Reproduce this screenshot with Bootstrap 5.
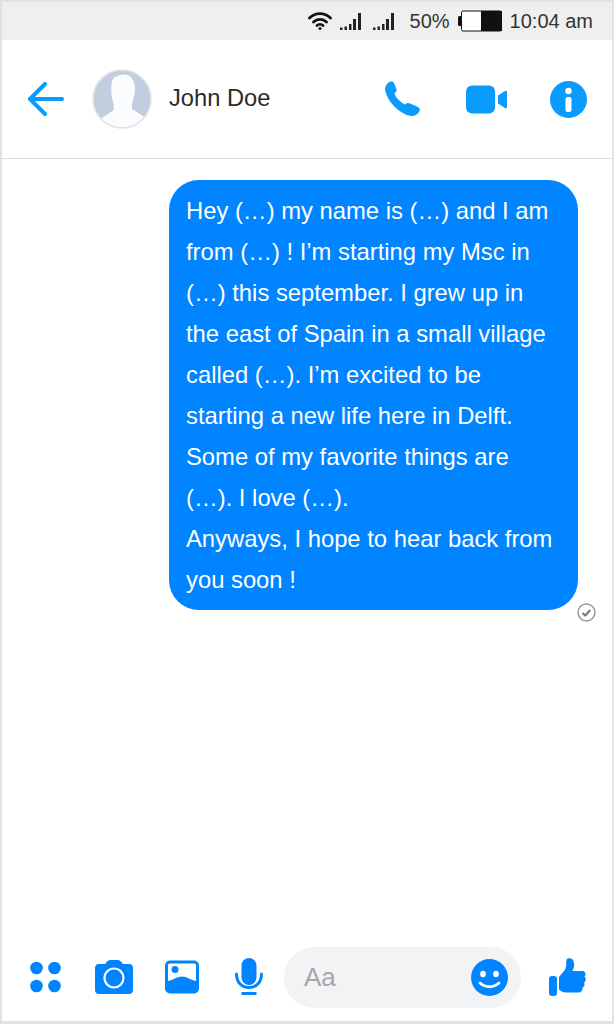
<!DOCTYPE html>
<html lang="en">
<head>
<meta charset="utf-8">
<title>Chat</title>
<link href="https://cdn.jsdelivr.net/npm/bootstrap@5.3.0/dist/css/bootstrap.min.css" rel="stylesheet">
<style>
html,body{height:100%;margin:0;background:#fff}
body{font-family:"Liberation Sans",Arial,sans-serif;color:#222}
.frame{width:614px;height:1024px;border:2px solid #e2e2e2;border-bottom-width:3px;overflow:hidden}
.statusrow{height:38px;background:#efefef;font-size:20px;color:#333;padding-right:19px}
.gap-sig{margin-left:8px}
.gap-sig2{margin-left:11px}
.gap-pct{margin-left:15px}
.gap-bat{margin-left:8px}
.gap-time{margin-left:8px}
.headrow{height:119px;border-bottom:1px solid #dedede;padding-left:26px;padding-right:25px}
.pname{font-size:23.700px;color:#2b2b2b;margin-left:17px}
.avatar{margin-left:28px}
.gap-video{margin-left:45px}
.gap-info{margin-left:43px}
.chatarea{padding:21px 34px 0 0}
.bubble{width:409px;height:430px;background:#0084ff;color:#fff;border-radius:30px;padding:10px 17px;font-size:23.800px;line-height:41px;white-space:nowrap}
.seen{margin-right:-18px;margin-top:-7px}
.footrow{height:98px;padding:10px 0 0 27px}
.gap-cam{margin-left:34px}
.gap-img{margin-left:32px}
.gap-mic{margin-left:36px}
.gap-pill{margin-left:21px}
.gap-like{margin-left:28px}
.inputpill{width:237px;height:61px;background:#f2f3f5;border-radius:31px;padding:0 13px 0 20px;color:#a5a7ab;font-size:26px}
</style>
</head>
<body>
<div class="frame d-flex flex-column">
  <div class="statusrow d-flex align-items-center justify-content-end flex-shrink-0">
    <svg width="24" height="18" viewBox="0 0 24 18" fill="none" stroke="#111" stroke-width="2.800" stroke-linecap="round"><path d="M1.500 6a15 15 0 0 1 21 0"/><path d="M5.500 10a9.500 9.500 0 0 1 13 0"/><path d="M9 13.500a4.500 4.500 0 0 1 6 0"/><circle cx="12" cy="16.500" r="1.500" fill="#111" stroke="none"/></svg>
    <svg class="gap-sig" width="22" height="19" viewBox="0 0 22 19" fill="#222"><rect x="0" y="15.500" width="2.500" height="2.500"/><rect x="4.500" y="14.500" width="2.500" height="3.500"/><rect x="9" y="12" width="2.500" height="6"/><rect x="13" y="7" width="3" height="11"/><rect x="18" y="1" width="3" height="17"/></svg>
    <svg class="gap-sig2" width="22" height="19" viewBox="0 0 22 19" fill="#222"><rect x="0" y="15.500" width="2.500" height="2.500"/><rect x="4.500" y="14.500" width="2.500" height="3.500"/><rect x="9" y="12" width="2.500" height="6"/><rect x="13" y="7" width="3" height="11"/><rect x="18" y="1" width="3" height="17"/></svg>
    <span class="gap-pct">50%</span>
    <svg class="gap-bat" width="44" height="22" viewBox="0 0 44 22"><rect x="0" y="6" width="4" height="10" rx="1.500" fill="#111"/><rect x="3.500" y="1" width="40" height="20" rx="1.500" fill="#fff" stroke="#111"/><rect x="23" y="1" width="21" height="20" fill="#111"/></svg>
    <span class="gap-time">10:04 am</span>
  </div>
  <div class="headrow d-flex align-items-center flex-shrink-0">
    <svg width="36" height="34" viewBox="0 0 36 34" fill="none" stroke="#0a9bff" stroke-width="4" stroke-linecap="round" stroke-linejoin="round"><path d="M34 17H2"/><path d="M17 2 2 17l15 15"/></svg>
    <svg class="avatar" width="60" height="60" viewBox="0 0 60 60"><defs><clipPath id="avc"><circle cx="30" cy="30" r="28.500"/></clipPath></defs><circle cx="30" cy="30" r="28.500" fill="#c3cde0"/><path clip-path="url(#avc)" d="M23 8c4-2 9-3 13-2 4 2 7 7 7 14 0 6-2 10-3 15v5l17 11v11H3V51l7-2 11.700-8v-6C20 30 19 25 19.300 20 19.500 14 20 10 23 8z" fill="#fbfcfe"/><circle cx="30" cy="30" r="29" fill="none" stroke="#e2e2e2" stroke-width="1.500"/></svg>
    <span class="pname">John Doe</span>
    <svg class="ms-auto" width="36" height="36" viewBox="0 0 36 36" fill="#0a9bff"><path d="M3 2C5 0 8 0 9 2l2.500 6c.5 2-.5 3-2 4 .5 4 5.500 9 10.500 11.500 1.500-1.500 3-2 5-1l8 3.500c2 1.500 2.500 3.500 1 5-2 3-5 4.500-8 4C13 33 1 18 0 8c0-2 1-4 3-6z"/></svg>
    <svg class="gap-video" width="41" height="29" viewBox="0 0 41 29" fill="#0a9bff"><rect width="29" height="28" y=".5" rx="6"/><path d="M32 10.500 39 6c1-.6 2 0 2 1v15c0 1-1 1.600-2 1l-7-4.500z"/></svg>
    <svg class="gap-info" width="37" height="37" viewBox="0 0 37 37"><circle cx="18.500" cy="18.500" r="18.500" fill="#0a9bff"/><circle cx="18.500" cy="10" r="3.200" fill="#fff"/><rect x="15.500" y="16" width="6" height="15" rx="2" fill="#fff"/></svg>
  </div>
  <div class="chatarea flex-grow-1 d-flex flex-column align-items-end">
    <div class="bubble">Hey (…) my name is (…) and I am<br>from (…) ! I’m starting my Msc in<br>(…) this september. I grew up in<br>the east of Spain in a small village<br>called (…). I’m excited to be<br>starting a new life here in Delft.<br>Some of my favorite things are<br>(…). I love (…).<br>Anyways, I hope to hear back from<br>you soon !</div>
    <svg class="seen" width="19" height="19" viewBox="0 0 19 19" fill="none" stroke="#9a9a9a"><circle cx="9.500" cy="9.500" r="8.500" stroke-width="1.500"/><path d="M5.500 10l2.800 2.500 5-5.500" stroke-width="2" stroke="#777"/></svg>
  </div>
  <div class="footrow d-flex align-items-center flex-shrink-0">
    <svg width="32" height="32" viewBox="0 0 32 32" fill="#0084ff"><circle cx="7.500" cy="7" r="6.300"/><circle cx="25.500" cy="7" r="6.300"/><circle cx="7.500" cy="25" r="6.300"/><circle cx="25.500" cy="25" r="6.300"/></svg>
    <svg class="gap-cam" width="38" height="34" viewBox="0 0 38 34"><path fill="#0084ff" d="M4 4h6l2-2.500C13 .5 14 0 15 0h8c1 0 2 .5 3 1.500L28 4h6c2.500 0 4 1.500 4 4v22c0 2.500-1.500 4-4 4H4c-2.500 0-4-1.500-4-4V8c0-2.500 1.500-4 4-4z"/><circle cx="19" cy="18" r="9.500" fill="none" stroke="#fff" stroke-width="2.200"/></svg>
    <svg class="gap-img" width="34" height="34" viewBox="0 0 34 34"><rect width="34" height="33" y=".5" rx="5" fill="#0084ff"/><rect x="3" y="3.500" width="28" height="23" rx="1.500" fill="#fff"/><circle cx="10" cy="9.500" r="3.500" fill="#0084ff"/><path fill="#0084ff" d="M3 21c5-1 9-4.500 14-4.500S26 20 31 21v9H3z"/></svg>
    <svg class="gap-mic" width="28" height="38" viewBox="0 0 28 38"><rect x="6.500" y="0" width="15" height="27" rx="7.500" fill="#0084ff"/><path d="M1.500 16c0 8 5 13.500 12.500 13.500S26.500 24 26.500 16" fill="none" stroke="#0084ff" stroke-width="3" stroke-linecap="round"/><rect x="6.500" y="34" width="15" height="3" fill="#0084ff"/></svg>
    <div class="gap-pill inputpill d-flex align-items-center justify-content-between">
      <span>Aa</span>
      <svg width="37" height="37" viewBox="0 0 37 37"><circle cx="18.500" cy="18.500" r="18.500" fill="#0084ff"/><ellipse cx="12" cy="15" rx="2.800" ry="3.200" fill="#fff"/><ellipse cx="25" cy="15" rx="2.800" ry="3.200" fill="#fff"/><path d="M9 24c5.500 5 13.500 5 19 0" fill="none" stroke="#fff" stroke-width="2.800" stroke-linecap="round"/></svg>
    </div>
    <svg class="gap-like" width="38" height="38" viewBox="0 0 38 38" fill="#0084ff"><rect x="0" y="18" width="8" height="20" rx="3"/><path d="M10 19c3-4 6-6 7-10 .5-2 0-5 .5-7 .5-2.500 5-2.500 6.500 0 2 4 1 8-.5 11h10c3 0 4 4 2 5.500 2 2 1.500 5-.5 6 1 2 .5 4.500-1.500 5 .5 3-1 5-4 5H17c-3 0-5-1-7-3z"/></svg>
  </div>
</div>
</body>
</html>
